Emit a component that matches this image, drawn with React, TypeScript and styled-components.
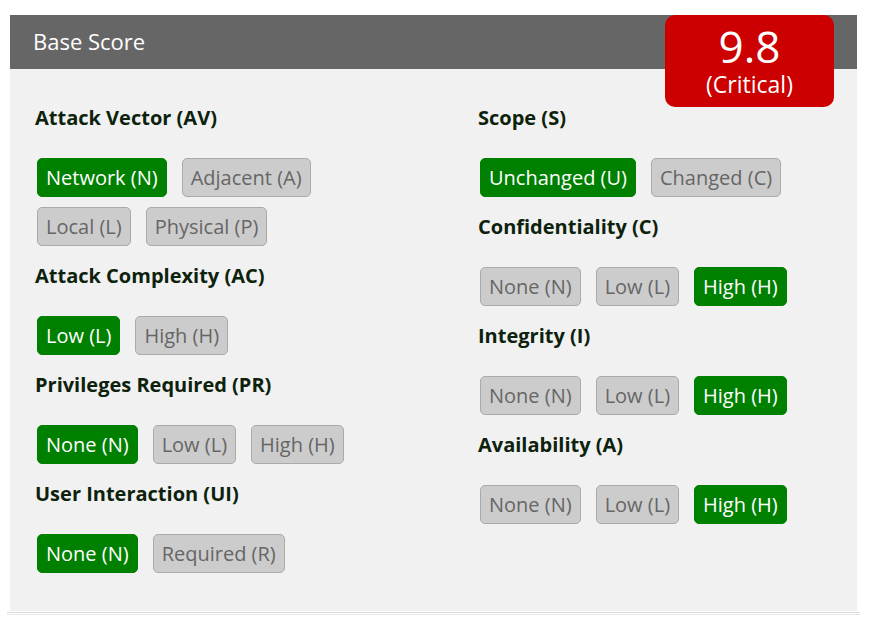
import styled, { createGlobalStyle } from "styled-components";

const GlobalStyle = createGlobalStyle`
  body {
    margin: 0;
    background: #fff;
    font-family: "Open Sans", "Noto Sans", sans-serif;
  }
`;

const Page = styled.div`
  padding: 15px 15px 0 10px;
`;

const Panel = styled.div`
  position: relative;
  width: 847px;
`;

const Header = styled.div`
  height: 54px;
  background: #666;
  color: #fff;
  font-size: 22px;
  line-height: 52px;
  padding-left: 23px;
`;

const ScoreBadge = styled.div`
  position: absolute;
  top: 0;
  right: 23px;
  width: 169px;
  height: 92px;
  box-sizing: border-box;
  padding-top: 9px;
  border-radius: 10px;
  background: #cc0000;
  color: #fff;
  text-align: center;
`;

const ScoreValue = styled.div`
  font-size: 44px;
  line-height: 44px;
`;

const Severity = styled.div`
  margin-top: 4px;
  font-size: 23px;
  line-height: 24px;
`;

const Body = styled.div`
  display: grid;
  grid-template-columns: 443px 1fr;
  background: #f1f1f1;
  padding: 37px 0 20px 25px;
`;

const Column = styled.div`
  display: flex;
  flex-direction: column;
`;

const Section = styled.div`
  margin-bottom: 18px;
`;

const Heading = styled.h3`
  margin: 0 0 28px;
  font-size: 20px;
  line-height: 24px;
  font-weight: 700;
  color: #0d220d;
`;

const Options = styled.div`
  display: flex;
  flex-wrap: wrap;
  gap: 10px 15px;
  padding-left: 2px;
  max-width: 360px;
`;

const Option = styled.button<{ $active?: boolean }>`
  height: 39px;
  padding: 0 8px;
  border-radius: 5px;
  border: 1px solid ${(p) => (p.$active ? "#008000" : "#aaa")};
  background: ${(p) => (p.$active ? "#008000" : "#ccc")};
  color: ${(p) => (p.$active ? "#fff" : "#666")};
  font-family: inherit;
  font-size: 20px;
  line-height: 27px;
  cursor: pointer;
`;

const Divider = styled.div`
  height: 1px;
  margin: 1px -3px 0;
  border-top: 1px solid #dcdcdc;
  border-bottom: 1px solid #e6e6e6;
`;

type Metric = { title: string; options: string[]; selected: number };

const leftMetrics: Metric[] = [
  { title: "Attack Vector (AV)", options: ["Network (N)", "Adjacent (A)", "Local (L)", "Physical (P)"], selected: 0 },
  { title: "Attack Complexity (AC)", options: ["Low (L)", "High (H)"], selected: 0 },
  { title: "Privileges Required (PR)", options: ["None (N)", "Low (L)", "High (H)"], selected: 0 },
  { title: "User Interaction (UI)", options: ["None (N)", "Required (R)"], selected: 0 },
];

const rightMetrics: Metric[] = [
  { title: "Scope (S)", options: ["Unchanged (U)", "Changed (C)"], selected: 0 },
  { title: "Confidentiality (C)", options: ["None (N)", "Low (L)", "High (H)"], selected: 2 },
  { title: "Integrity (I)", options: ["None (N)", "Low (L)", "High (H)"], selected: 2 },
  { title: "Availability (A)", options: ["None (N)", "Low (L)", "High (H)"], selected: 2 },
];

const MetricGroup = ({ metric }: { metric: Metric }) => (
  <Section>
    <Heading>{metric.title}</Heading>
    <Options>
      {metric.options.map((o, i) => (
        <Option key={o} $active={i === metric.selected}>
          {o}
        </Option>
      ))}
    </Options>
  </Section>
);

const App = () => {
  return (
    <Page>
      <GlobalStyle />
      <Panel>
        <Header>Base Score</Header>
        <ScoreBadge>
          <ScoreValue>9.8</ScoreValue>
          <Severity>(Critical)</Severity>
        </ScoreBadge>
        <Body>
          <Column>
            {leftMetrics.map((m) => (
              <MetricGroup key={m.title} metric={m} />
            ))}
          </Column>
          <Column>
            {rightMetrics.map((m) => (
              <MetricGroup key={m.title} metric={m} />
            ))}
          </Column>
        </Body>
      </Panel>
      <Divider />
    </Page>
  );
};

export default App;
